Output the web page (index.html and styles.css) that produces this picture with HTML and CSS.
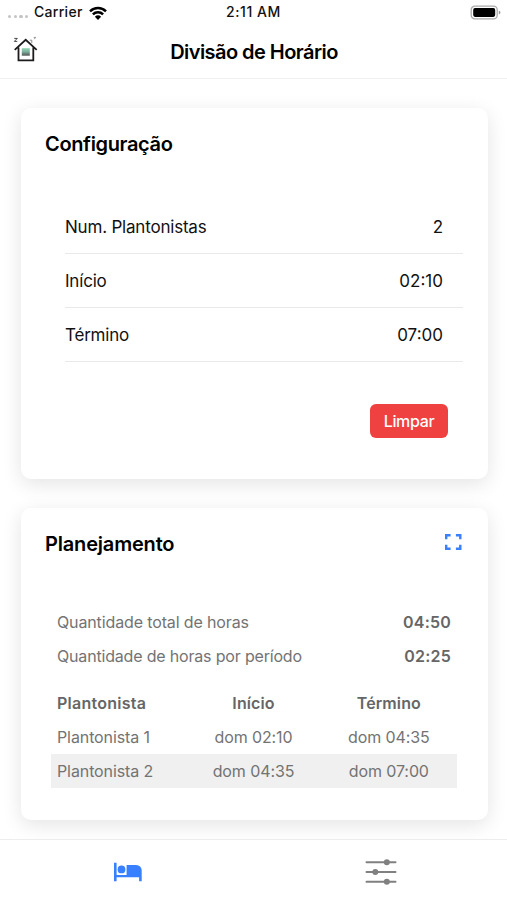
FILE: index.html
```html
<!DOCTYPE html>
<html lang="pt-BR">
<head>
<meta charset="utf-8">
<title>Divisão de Horário</title>
<link rel="stylesheet" href="styles.css">
</head>
<body>
<div class="app">
  <header class="header">
    <div class="status">
      <div class="carrier">
        <span class="dots"><i></i><i></i><i></i><i></i></span>
        <span class="carrier-name">Carrier</span>
        <svg class="wifi" width="18" height="14" viewBox="0 0 18 14" fill="none" stroke="#000" stroke-width="2.5">
          <path d="M1 5.3a11.5 11.5 0 0 1 16 0M3.9 8.4a7.2 7.2 0 0 1 10.2 0"/>
          <path d="M9 14 5.9 10.8a4.5 4.5 0 0 1 6.2 0z" fill="#000" stroke="none"/>
        </svg>
      </div>
      <span class="clock">2:11 AM</span>
      <svg class="battery" width="31" height="15" viewBox="0 0 31 15">
        <rect x="1.2" y="1.2" width="26" height="12.6" rx="3.6" fill="#fff" stroke="#aaa" stroke-width="1.3"/>
        <rect x="3.2" y="3.1" width="22" height="8.8" rx="1.8" fill="#000"/>
        <path d="M28.8 5.5q1.6.4 1.6 2t-1.6 2z" fill="#999"/>
      </svg>
    </div>
    <div class="toolbar">
      <svg class="home" width="26" height="26" viewBox="0 0 26 26" fill="none">
        <defs><linearGradient id="win" x1="0" y1="0" x2="0" y2="1"><stop offset="0" stop-color="#90d3ae"/><stop offset=".4" stop-color="#83b9a5"/><stop offset="1" stop-color="#555"/></linearGradient></defs>
        <path d="M1.700 13.800 12.700 3.800l11 10M5.500 11.400v13h14.800v-13" stroke="#1c1c1c" stroke-width="1.8"/>
        <rect x="8.800" y="12.200" width="8" height="7.500" fill="url(#win)"/>
        <path d="M1.300 2.400h3L1.300 5.400h3" stroke="#333" stroke-width=".9"/>
        <path d="M16.800 4.200h2v2.800" stroke="#888" stroke-width="1"/>
        <path d="M20.700 1.400h1.900l-1.300 1.800" stroke="#777" stroke-width=".8"/>
      </svg>
      <h1>Divisão de Horário</h1>
    </div>
  </header>
  <main class="content">
    <section class="card config">
      <h2>Configuração</h2>
      <div class="list">
        <div class="item"><span class="label">Num. Plantonistas</span><span>2</span></div>
        <div class="item"><span class="label">Início</span><span>02:10</span></div>
        <div class="item"><span class="label">Término</span><span>07:00</span></div>
      </div>
      <div class="actions"><button class="clear">Limpar</button></div>
    </section>
    <section class="card plan">
      <div class="plan-head">
        <h2>Planejamento</h2>
        <svg class="expand" width="17" height="16" viewBox="0 0 17 16" fill="none" stroke="#3880ff" stroke-width="2.4"><path d="M1.200 5.300V1.200h4.400M10.900 1.200h4.400v4.100M15.300 10.700v4.100h-4.400M5.600 14.800H1.200v-4.100"/></svg>
      </div>
      <div class="totals">
        <div class="total"><span class="t1">Quantidade total de horas</span><b>04:50</b></div>
        <div class="total"><span class="t2">Quantidade de horas por período</span><b>02:25</b></div>
      </div>
      <div class="table">
        <div class="row head"><span>Plantonista</span><span>Início</span><span>Término</span></div>
        <div class="row"><span>Plantonista 1</span><span>dom 02:10</span><span>dom 04:35</span></div>
        <div class="row alt"><span>Plantonista 2</span><span>dom 04:35</span><span>dom 07:00</span></div>
      </div>
    </section>
  </main>
  <nav class="tabs">
    <div class="tab">
      <svg width="30" height="20" viewBox="0 0 30 20" fill="#3880ff"><path d="M1 .8h2.600v12.100h10V3h9.600a5.500 5.500 0 0 1 5.500 5.500v10.700h-2.600v-4H3.600v4H1z"/><circle cx="8.500" cy="7.400" r="3.900"/></svg>
    </div>
    <div class="tab">
      <svg width="32" height="28" viewBox="0 0 32 28" fill="#808080"><path d="M1.500 4.300h29M1.500 14h29M1.500 23.700h29" stroke="#808080" stroke-width="2" stroke-linecap="round"/><circle cx="21.800" cy="4.300" r="3"/><circle cx="10.300" cy="14" r="3"/><circle cx="21.800" cy="23.700" r="3"/></svg>
    </div>
  </nav>
</div>
</body>
</html>
```
FILE: styles.css
```css
* { box-sizing: border-box; }
body { margin: 0; font-family: Inter, "Liberation Sans", sans-serif; background: #fff; color: #111; }
h1, h2 { margin: 0; font-weight: 600; font-size: 20px; color: #000; }
.app { height: 900px; display: flex; flex-direction: column; overflow: hidden; }
.header { height: 79px; border-bottom: 1px solid #f0f0f0; background: #fff; flex: none; position: relative; }
.status { height: 26px; display: grid; grid-template-columns: 1fr auto 1fr; align-items: center; padding: 0 5px 0 8px; font-size: 14px; font-weight: 500; line-height: 16px; }
.carrier { display: flex; align-items: center; }
.carrier-name { letter-spacing: .3px; margin-top: -2px; }
.clock { letter-spacing: .55px; margin: -2px 3px 0 0; }
.dots { display: flex; gap: 2.200px; width: 26px; padding-top: 7px; }
.dots i { width: 3.400px; height: 3.400px; border-radius: 50%; background: #c4c4c4; }
.wifi { margin: -1px 0 0 6px; }
.battery { justify-self: end; margin: -1px 1px 0 0; }
.toolbar { height: 52px; display: grid; grid-template-columns: 1fr auto 1fr; align-items: center; padding: 0 12px 0 13px; }
.home { margin-top: -6px; }
h1 { letter-spacing: -0.55px; white-space: nowrap; }
.content { flex: 1; min-height: 0; padding: 29px 19.500px 0 20.500px; display: flex; flex-direction: column; gap: 29px; }
.card { background: #fff; border-radius: 10px; box-shadow: 0 5px 20px rgba(0,0,0,.11); flex: none; }
.config { height: 371px; padding: 24px 24.500px; }
.config h2, .plan-head { height: 24px; line-height: 24px; }
.config h2 { letter-spacing: -.35px; }
.plan-head h2 { letter-spacing: -.18px; }
.list { margin: 44px 0 0 20px; font-size: 17px; }
.item { height: 54px; border-bottom: 1px solid #e9e9e9; display: flex; justify-content: space-between; align-items: center; padding-right: 20px; }
.label { letter-spacing: -.2px; }
.actions { display: flex; justify-content: flex-end; padding: 42px 15px 0 0; }
.clear { width: 78px; height: 34px; border: 0; border-radius: 6px; padding: 0; background: #f04141; color: #fff; font: 500 16px Inter, sans-serif; letter-spacing: -.35px; }
.plan { height: 312px; padding: 24px 30px; color: #737373; font-size: 16px; }
.plan-head { display: flex; justify-content: space-between; align-items: center; margin: 0 -4px 0 -5.500px; }
.expand { margin-top: -4px; }
.totals { margin-top: 49px; }
.total { height: 34.300px; display: flex; justify-content: space-between; align-items: center; padding: 0 6.500px; }
.t1 { letter-spacing: -.13px; }
.t2 { letter-spacing: -.18px; }
b { font-weight: 600; color: #666; letter-spacing: .2px; }
.table { width: 406px; margin-top: 12px; }
.row { height: 34.300px; display: grid; grid-template-columns: repeat(3, 1fr); align-items: center; letter-spacing: -.1px; }
.row span { text-align: center; }
.row span:first-child { text-align: left; padding-left: 6.500px; }
.head { font-weight: 600; color: #666; letter-spacing: .1px; }
.head span:first-child { letter-spacing: .25px; }
.alt { background: #f0f0f0; }
.tabs { height: 61px; border-top: 1px solid #ededed; background: #fff; display: grid; grid-template-columns: 1fr 1fr; flex: none; position: relative; }
.tab { display: flex; justify-content: center; align-items: center; padding: 4px 0 0 2px; }
```
